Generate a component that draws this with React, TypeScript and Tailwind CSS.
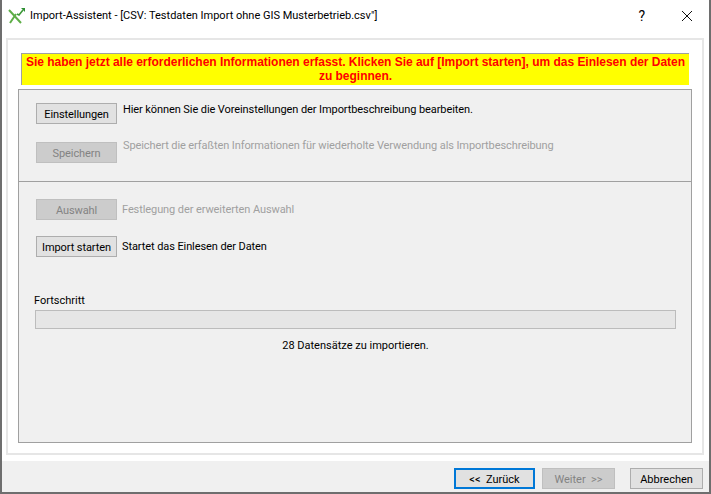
const Btn = ({ label, disabled, className = "" }: { label: string; disabled?: boolean; className?: string }) => (
  <div
    className={`h-[21px] pt-[2px] flex items-center justify-center border whitespace-pre ${
      disabled ? "bg-[#cccccc] border-[#bfbfbf] text-[#838383]" : "bg-[#e1e1e1] border-[#adadad] text-[#000000]"
    } ${className}`}
  >
    {label}
  </div>
);

const App = () => {
  return (
    <div className="w-[711px] h-[494px] flex flex-col bg-white border-l-2 border-r-2 border-b-2 border-[#6e6e6e] text-[11px] leading-[16px] font-['Roboto',sans-serif] overflow-hidden">
      {/* title bar */}
      <div className="h-[31px] flex items-center shrink-0">
        <svg width="18" height="18" viewBox="0 0 18 18" className="ml-[6px]" fill="none">
          <path d="M1 3 L13 16 M2 16 L8 7" stroke="#5fae48" strokeWidth="2" />
          <path d="M9 7 L11 8 L15 3" stroke="#3f9a3a" strokeWidth="1.6" />
          <path d="M13 1 H17 V5 Z" fill="#2f8f34" />
        </svg>
        <span className="ml-[4px] mt-[1px] text-[#000000]">Import-Assistent - [CSV: Testdaten Import ohne GIS Musterbetrieb.csv"]</span>
        <span className="ml-auto text-[14px] text-[#000000]">?</span>
        <svg width="12" height="12" viewBox="0 0 12 12" className="ml-[36px] mr-[16px]" fill="none">
          <path d="M1 1 L11 11 M11 1 L1 11" stroke="#111111" strokeWidth="1" />
        </svg>
      </div>

      {/* wizard page */}
      <div className="h-[417px] mt-[7px] ml-[4px] mr-[5px] border-2 border-[#e6e6e6] pt-[13px] px-[10px] shrink-0">
        <div className="mx-[3px] h-[32px] bg-[#ffff00] border-t border-l border-[#a0a0a0] text-[12px] text-[#ff0000] font-bold text-center pt-[1px] px-[3px] leading-[14px] tracking-[-0.02px] font-['Liberation_Sans',sans-serif]">
          Sie haben jetzt alle erforderlichen Informationen erfasst. Klicken Sie auf [Import starten], um das Einlesen der Daten zu beginnen.
        </div>
        <div className="mt-[4px] h-[354px] flex flex-col bg-[#f0f0f0] border border-[#a0a0a0]">
          <div className="h-[91px] shrink-0 pt-[13px] pl-[17px] flex flex-col gap-[18px] tracking-[-0.09px]">
            <div className="flex items-start">
              <Btn label="Einstellungen" className="w-[81px]" />
              <span className="ml-[6px] -mt-[1px] whitespace-nowrap text-[#000000]">Hier können Sie die Voreinstellungen der Importbeschreibung bearbeiten.</span>
            </div>
            <div className="flex items-start">
              <Btn label="Speichern" disabled className="w-[81px]" />
              <span className="ml-[6px] -mt-[4px] whitespace-nowrap text-[#a0a0a0]">Speichert die erfaßten Informationen für wiederholte Verwendung als Importbeschreibung</span>
            </div>
          </div>
          <div className="border-t border-[#a0a0a0] pt-[17px] pl-[16px] pr-[15px] flex flex-col grow">
            <div className="flex flex-col gap-[16px] pl-[1px] tracking-[-0.09px]">
              <div className="flex items-start">
                <Btn label="Auswahl" disabled className="w-[81px]" />
                <span className="ml-[5px] mt-[3px] whitespace-nowrap text-[#a0a0a0]">Festlegung der erweiterten Auswahl</span>
              </div>
              <div className="flex items-start">
                <Btn label="Import starten" className="w-[81px]" />
                <span className="ml-[5px] mt-[3px] whitespace-nowrap text-[#000000]">Startet das Einlesen der Daten</span>
              </div>
            </div>
            <span className="mt-[36px] -ml-[1px] text-[#000000]">Fortschritt</span>
            <div className="mt-[1px] h-[19px] bg-[#e6e6e6] border border-[#bcbcbc]" />
            <span className="mt-[9px] text-center text-[#000000]">28 Datensätze zu importieren.</span>
          </div>
        </div>
      </div>

      {/* footer buttons */}
      <div className="mt-[6px] flex items-end justify-end grow bg-[#f0f0f0] pr-[6px] pb-[3px]">
        <div className="w-[81px] h-[21px] pt-[2px] flex items-center justify-center border-2 border-[#0078d7] bg-[#e1e1e1] text-[#000000] whitespace-pre">{"<<  Zurück"}</div>
        <Btn label="Weiter  >>" disabled className="w-[73px] ml-[7px]" />
        <Btn label="Abbrechen" className="w-[73px] ml-[15px]" />
      </div>
    </div>
  );
};

export default App;
